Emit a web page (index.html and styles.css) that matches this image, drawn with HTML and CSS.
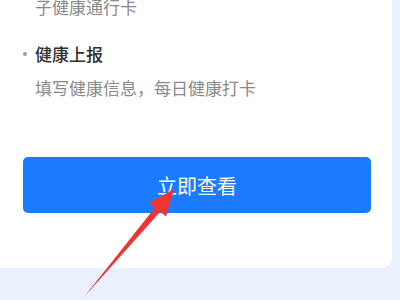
FILE: index.html
```html
<!DOCTYPE html>
<html lang="zh-CN">
<head>
<meta charset="utf-8">
<link rel="stylesheet" href="styles.css">
</head>
<body>
<div class="card">
  <p class="desc first">子健康通行卡</p>
  <div class="item">
    <div class="title"><span class="dot"></span>健康上报</div>
    <p class="desc">填写健康信息，每日健康打卡</p>
  </div>
  <button class="btn">立即查看</button>
</div>
<svg class="arrow" width="400" height="300" viewBox="0 0 400 300">
  <polygon points="84,297 154.8,207.8 149,202.9 174,189 166,216.6 160.2,211.7" fill="#f03434"/>
</svg>
</body>
</html>
```
FILE: styles.css
```css
html, body {
  margin: 0;
  padding: 0;
}
body {
  width: 400px;
  height: 300px;
  overflow: hidden;
  background: #e8f1fc;
  font-family: "Noto Sans CJK SC", "Noto Sans", sans-serif;
  position: relative;
}
.card {
  width: 392px;
  height: 268px;
  box-sizing: border-box;
  background: #fff;
  border-radius: 0 0 10px 0;
  padding: 0 21px 0 23px;
  display: flex;
  flex-direction: column;
  overflow: hidden;
}
.desc {
  margin: 0;
  font-size: 17px;
  line-height: 24px;
  color: #8a8a8a;
  padding-left: 12px;
}
.desc.first {
  margin-top: -5px;
}
.item {
  margin-top: 23px;
  display: flex;
  flex-direction: column;
  gap: 10px;
}
.title {
  display: flex;
  align-items: center;
  font-size: 17px;
  line-height: 24px;
  color: #303030;
  font-weight: 500;
}
.dot {
  width: 4px;
  height: 4px;
  border-radius: 50%;
  background: #9a9a9a;
  margin-right: 8px;
}
.btn {
  margin-top: 57px;
  height: 56px;
  border: none;
  border-radius: 5px;
  background: #1a7bff;
  color: #fff;
  font-family: inherit;
  font-size: 20px;
  cursor: pointer;
}
.arrow {
  position: absolute;
  left: 0;
  top: 0;
  pointer-events: none;
}
```
